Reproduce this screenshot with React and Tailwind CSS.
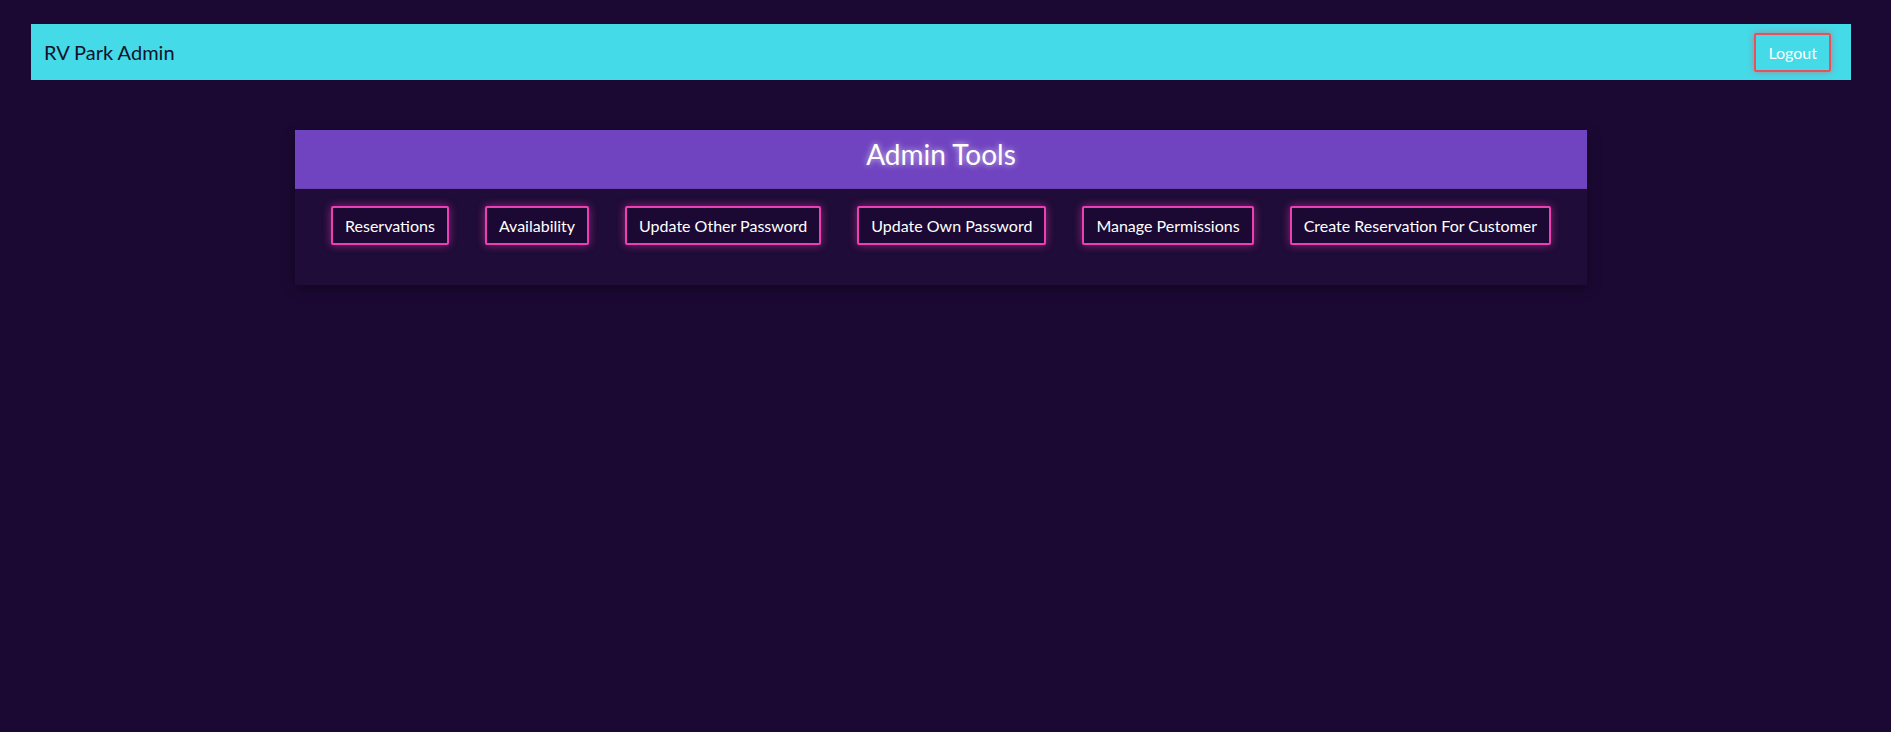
export default function App() {
  const tools = [
    "Reservations",
    "Availability",
    "Update Other Password",
    "Update Own Password",
    "Manage Permissions",
    "Create Reservation For Customer",
  ];
  return (
    <div className="min-h-[732px] w-full bg-[#1b0933] pt-6 pl-[31px] pr-[40px] font-['Lato','Liberation_Sans',sans-serif]">
      <header className="flex h-[56px] items-center justify-between bg-[#44dae8] pl-[13px] pr-[20px]">
        <span className="text-[20px] text-[#13132a]">RV Park Admin</span>
        <button className="h-[39px] rounded-[2px] border-2 border-[#e8505c] px-3 text-base leading-[19px] text-white shadow-[0_0_6px_rgba(232,80,92,0.6)]">
          Logout
        </button>
      </header>

      <section className="mx-auto mt-[50px] w-[1292px] bg-[#1f0c38] pb-[40px] shadow-[0_4px_12px_rgba(0,0,0,0.35)]">
        <div className="flex h-[59px] items-center justify-center border-b border-[#6a40b0] bg-[#7043c0] pb-[10px]">
          <h1 className="text-[28px] leading-none text-white [text-shadow:0_0_6px_rgba(255,255,255,0.7)]">
            Admin Tools
          </h1>
        </div>
        <div className="flex justify-evenly pt-[17px]">
          {tools.map((t) => (
            <button
              key={t}
              className="rounded-[2px] border-2 border-[#ec3fb2] bg-[#1b0933] px-3 py-2 text-base leading-[19px] text-white shadow-[0_0_8px_rgba(236,63,178,0.55)]"
            >
              {t}
            </button>
          ))}
        </div>
      </section>
    </div>
  );
}
